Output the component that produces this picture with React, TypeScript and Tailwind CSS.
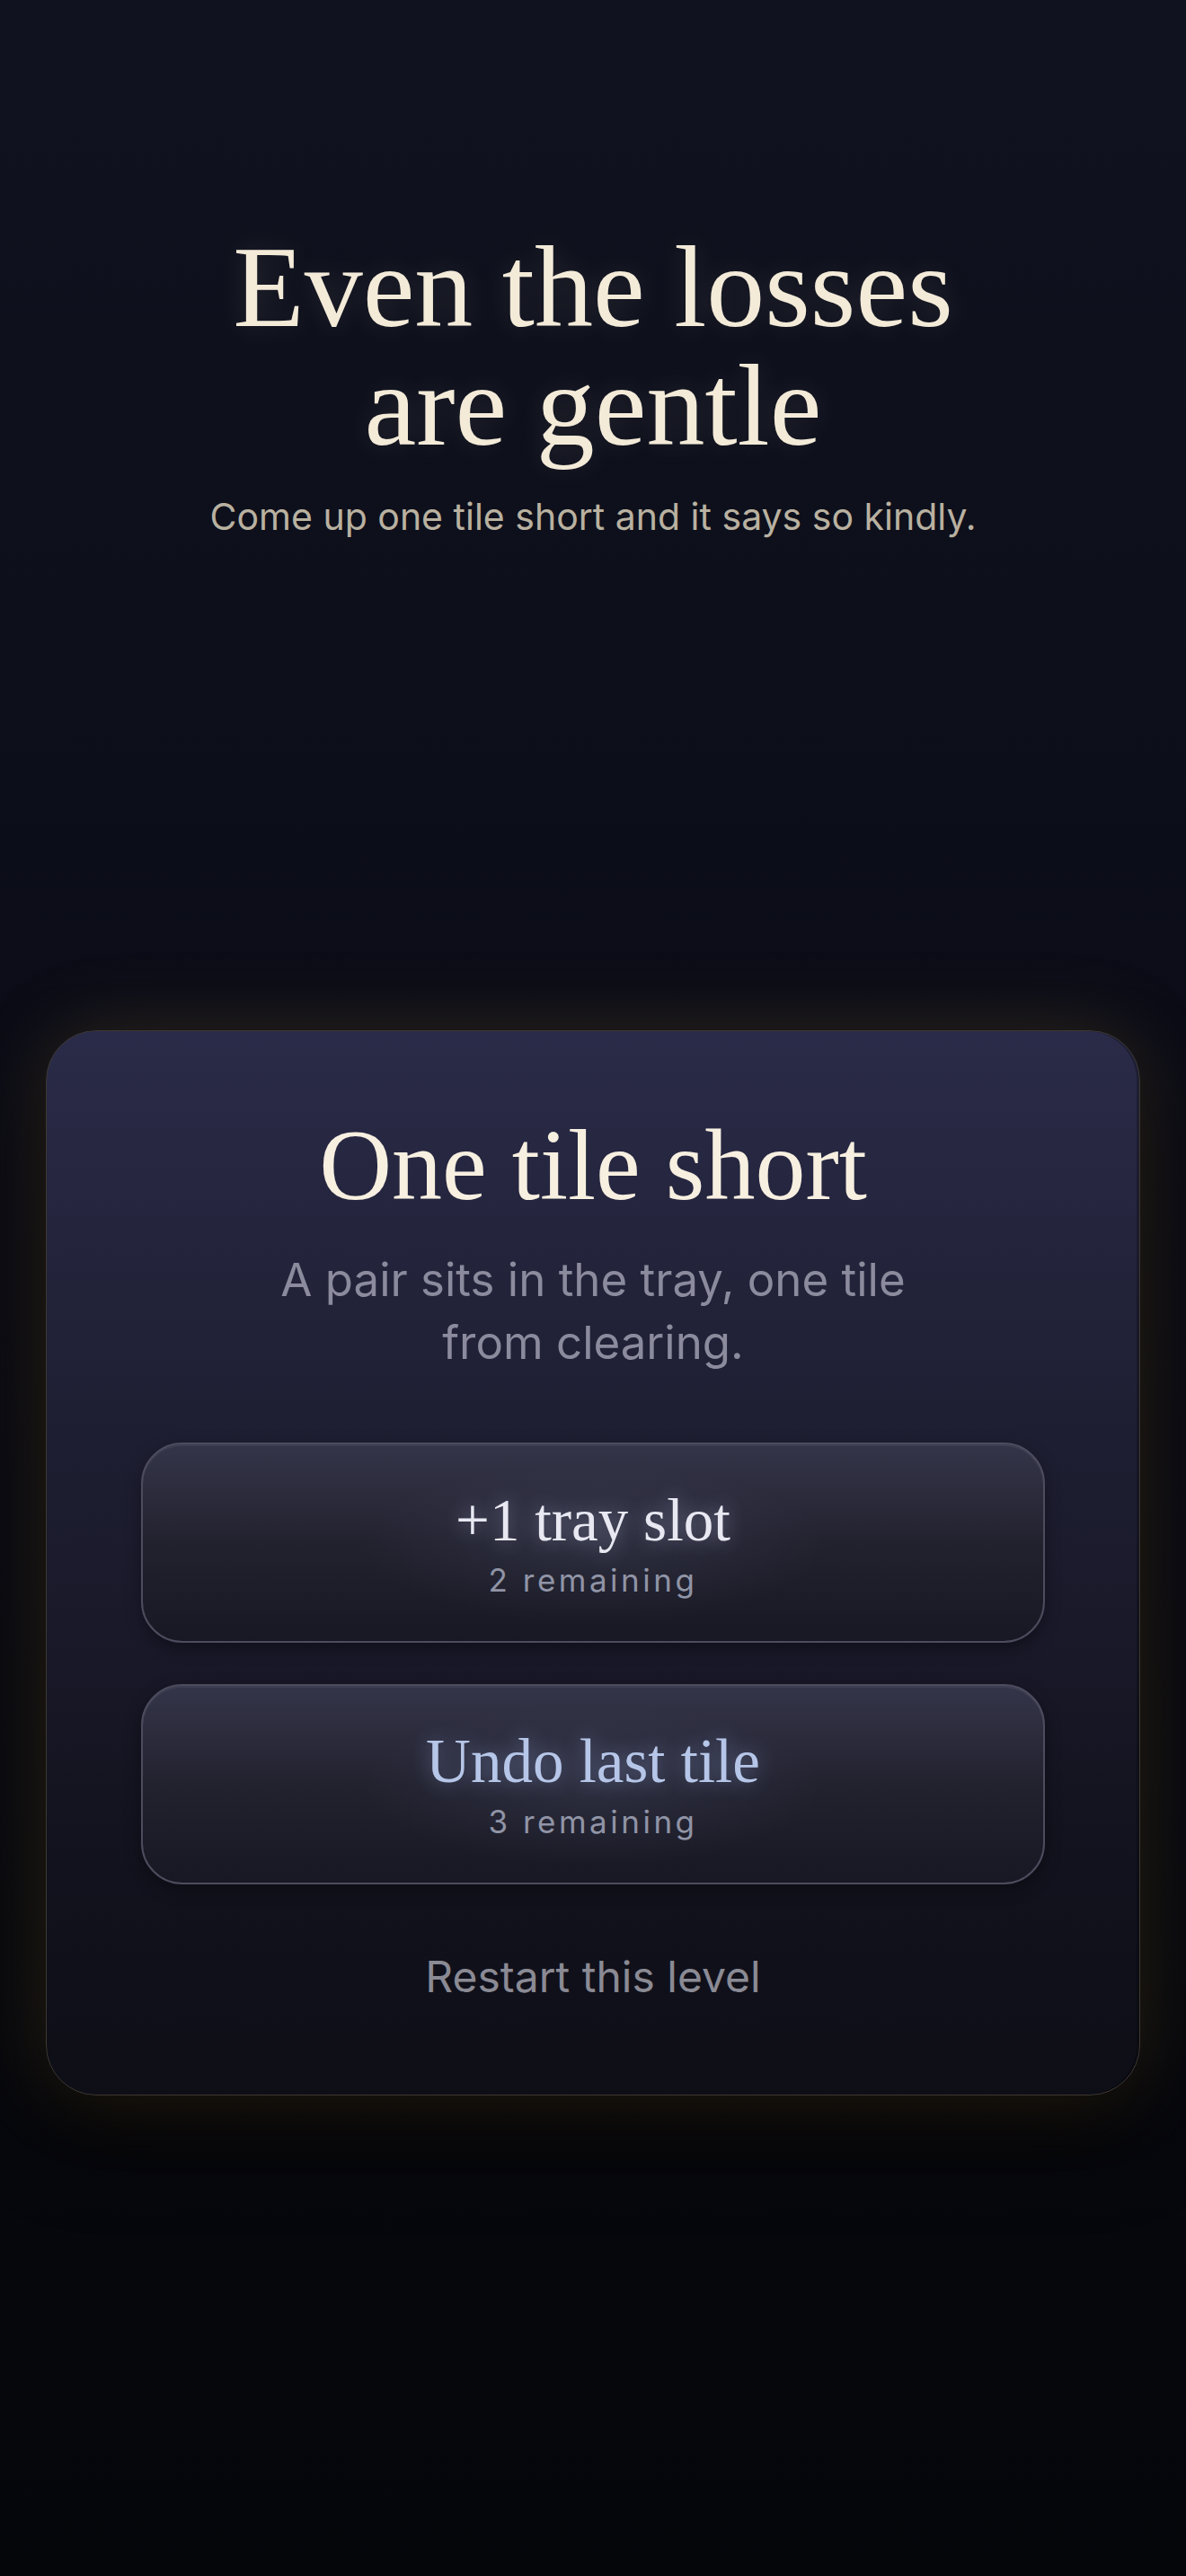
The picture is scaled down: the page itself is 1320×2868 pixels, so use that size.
const serif = { fontFamily: '"Liberation Serif", "DejaVu Serif", serif' };

const ActionButton = ({
  label,
  remaining,
  tone,
}: {
  label: string;
  remaining: number;
  tone: 'white' | 'blue';
}) => (
  <button
    className="relative flex h-[223px] w-full flex-col items-center justify-center gap-[11px] overflow-hidden rounded-[46px] border-2 border-[#4c4c5e] bg-gradient-to-b from-[#35354a] via-[#22222f] to-[#181824] shadow-[inset_0_2px_0_rgba(255,255,255,0.05),0_6px_18px_rgba(0,0,0,0.35)]"
  >
    <span className="pointer-events-none absolute left-1/2 top-1/2 h-[180px] w-[520px] -translate-x-1/2 -translate-y-1/2 rounded-full bg-[radial-gradient(ellipse_at_center,rgba(150,160,210,0.10),transparent_70%)]" />
    <span
      style={serif}
      className={`relative leading-[72px] ${
        tone === 'white'
          ? 'text-[67px] text-[#e8e8f2] [text-shadow:0_0_22px_rgba(210,215,255,0.45)]'
          : 'text-[69px] text-[#b6c6e8] [text-shadow:0_0_22px_rgba(170,195,255,0.45)]'
      }`}
    >
      {label}
    </span>
    <span className="relative font-['Inter',sans-serif] text-[35px] leading-[40px] tracking-[0.1em] text-[#9094a6]">
      {remaining} remaining
    </span>
  </button>
);

export default function App() {
  return (
    <div className="min-h-[2868px] w-full bg-[linear-gradient(180deg,#10131f_0%,#0d0f1b_25%,#0a0b15_45%,#080910_70%,#05060a_100%)] px-[51px]">
      {/* Hero copy */}
      <div className="flex flex-col items-center pt-[253px] text-center">
        <h1 style={serif} className="text-[130px] leading-[132px] text-[#f3ead8] [text-shadow:0_0_30px_rgba(243,234,216,0.12)]">
          Even the losses
          <br />
          are gentle
        </h1>
        <p className="mt-[34px] font-['Inter',sans-serif] text-[41px] leading-[48px] text-[#b9b1a0]">
          Come up one tile short and it says so kindly.
        </p>
      </div>

      {/* Modal card */}
      <div className="mt-[548px] rounded-[56px] border border-[#3d3830] bg-[linear-gradient(180deg,#2a2b48_0%,#222239_25%,#1b1b2d_50%,#13131f_75%,#0e0e17_100%)] px-[105px] pb-[103px] pt-[89px] shadow-[0_0_90px_rgba(190,150,70,0.2),0_50px_90px_rgba(0,0,0,0.7),inset_-3px_0_0_rgba(0,0,0,0.25)]">
        <h2 style={serif} className="text-center text-[112px] leading-[120px] text-[#f7efe0]">
          One tile short
        </h2>
        <p className="mx-auto mt-[33px] max-w-[780px] text-center font-['Inter',sans-serif] text-[51px] leading-[70px] text-[#8b8b9d]">
          A pair sits in the tray, one tile from clearing.
        </p>

        <div className="mt-[76px] flex flex-col gap-[46px]">
          <ActionButton label="+1 tray slot" remaining={2} tone="white" />
          <ActionButton label="Undo last tile" remaining={3} tone="blue" />
        </div>

        <div className="mt-[75px] text-center font-['Inter',sans-serif] text-[48px] leading-[56px] text-[#8a8a94]">
          Restart this level
        </div>
      </div>
    </div>
  );
}
